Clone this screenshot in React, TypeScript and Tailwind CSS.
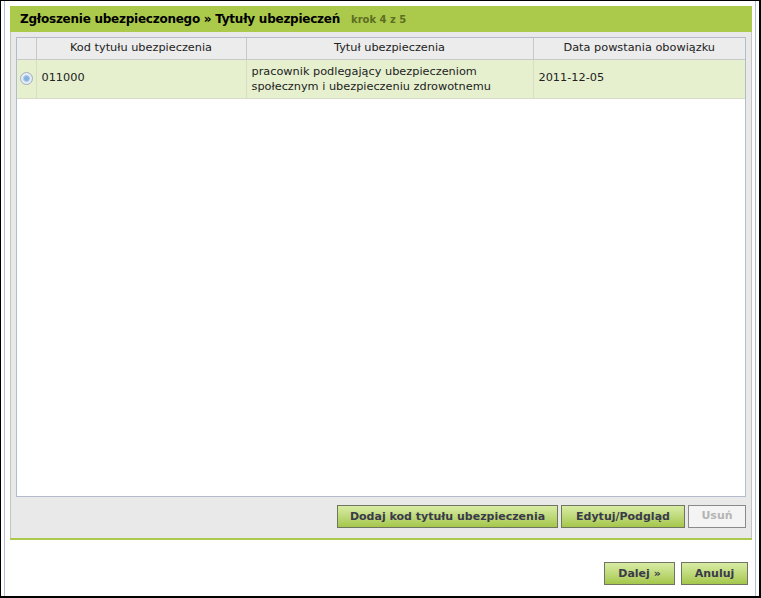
const font = { fontFamily: '"DejaVu Sans", Verdana, sans-serif' };

function GreenButton({ children, className = '' }: { children: React.ReactNode; className?: string }) {
  return (
    <button
      className={`h-[23px] px-0 whitespace-nowrap border border-[#6f7560] bg-gradient-to-b from-[#d9eca4] to-[#a5c74a] text-[11px] font-bold text-[#3a3a4a] leading-none ${className}`}
    >
      {children}
    </button>
  );
}

function Radio() {
  return (
    <span className="inline-flex w-[13px] h-[13px] rounded-full border border-[#a3aebd] bg-[#e4ecf4] items-center justify-center">
      <span className="w-[7px] h-[7px] rounded-full bg-[#86b0e0] border border-[#b0cbea]" />
    </span>
  );
}

export default function App() {
  return (
    <div style={font} className="w-[761px] h-[598px] bg-white border-l border-t border-black border-r-2 border-b-2 overflow-hidden">
      <div className="h-full ml-[3px] mr-[3px] border-l border-r border-[#b6bfd3] pt-[5px] px-[5px]">
        <div className="w-[742px]">
          <div className="h-[26px] bg-[#abc94b] flex items-center pl-[10px] gap-[11px]">
            <span className="text-[12px] font-bold text-black tracking-[-0.25px]">Zgłoszenie ubezpieczonego » Tytuły ubezpieczeń</span>
            <span className="text-[10px] font-bold text-[#5c6e24] pt-[1px]">krok 4 z 5</span>
          </div>
          <div className="h-[506px] bg-[#e9e9e9] border-l border-r border-[#c4c4c4] px-[5px] pt-[5px]">
            <div className="h-[460px] bg-white border border-[#b4bccb]">
              <table className="w-full border-collapse text-[11.3px] text-[#222]">
                <thead>
                  <tr className="h-[21px] bg-[#ececec]">
                    <th className="w-[19px] border-r border-b border-[#c8c8c8]" />
                    <th className="w-[210px] border-r border-b border-[#c8c8c8] font-normal">Kod tytułu ubezpieczenia</th>
                    <th className="w-[287px] border-r border-b border-[#c8c8c8] font-normal">Tytuł ubezpieczenia</th>
                    <th className="border-b border-[#c8c8c8] font-normal">Data powstania obowiązku</th>
                  </tr>
                </thead>
                <tbody>
                  <tr className="h-[39px] bg-[#e6f0cf]">
                    <td className="border-r border-b border-[#d9dcc4] text-center align-middle pt-[2px]">
                      <Radio />
                    </td>
                    <td className="border-r border-b border-[#d9dcc4] pl-[5px]">011000</td>
                    <td className="border-r border-b border-[#d9dcc4] pl-[5px] leading-[15px]">
                      pracownik podlegający ubezpieczeniom
                      <br />
                      społecznym i ubezpieczeniu zdrowotnemu
                    </td>
                    <td className="border-b border-[#d9dcc4] pl-[5px]">2011-12-05</td>
                  </tr>
                </tbody>
              </table>
            </div>
            <div className="flex justify-end gap-[3px] mt-[8px]">
              <GreenButton className="w-[221px]">Dodaj kod tytułu ubezpieczenia</GreenButton>
              <GreenButton className="w-[124px]">Edytuj/Podgląd</GreenButton>
              <button className="h-[23px] w-[58px] border border-[#8a8a8a] bg-[#f4f4f4] text-[11px] font-bold text-[#b4b4b4]">
                Usuń
              </button>
            </div>
          </div>
          <div className="h-[2px] bg-[#abc94b]" />
          <div className="flex justify-end gap-[6px] mt-[22px] pr-[4px]">
            <GreenButton className="w-[71px]">Dalej »</GreenButton>
            <GreenButton className="w-[67px]">Anuluj</GreenButton>
          </div>
        </div>
      </div>
    </div>
  );
}
